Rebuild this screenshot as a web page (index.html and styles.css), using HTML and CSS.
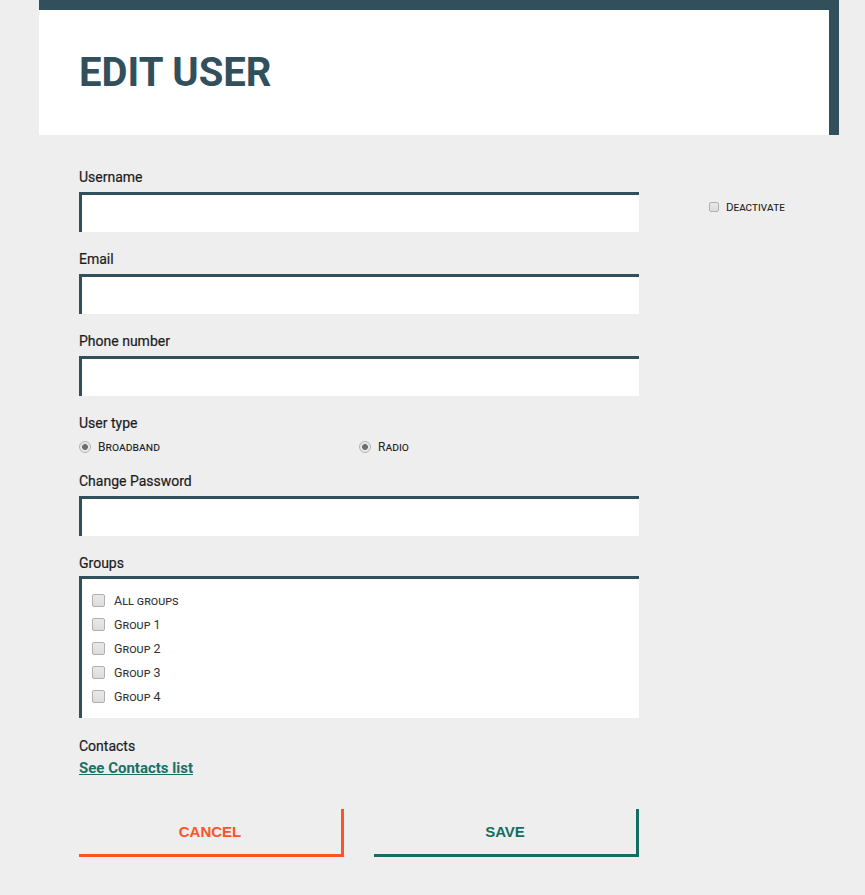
FILE: index.html
```html
<!DOCTYPE html>
<html lang="en">
<head>
<meta charset="utf-8">
<title>Edit user</title>
<link rel="stylesheet" href="styles.css">
</head>
<body>
<div class="page">
  <header class="header">
    <h1 class="title">EDIT USER</h1>
  </header>
  <form class="form">
    <div class="main">
      <div class="field">
        <label class="label">Username</label>
        <input class="input" type="text">
      </div>
      <div class="field">
        <label class="label">Email</label>
        <input class="input" type="text">
      </div>
      <div class="field">
        <label class="label">Phone number</label>
        <input class="input" type="text">
      </div>
      <div class="field field-radio">
        <label class="label">User type</label>
        <div class="radios">
          <label class="option"><input class="radio" type="radio" name="type" checked disabled><span>Broadband</span></label>
          <label class="option"><input class="radio" type="radio" name="type2" checked disabled><span>Radio</span></label>
        </div>
      </div>
      <div class="field">
        <label class="label">Change Password</label>
        <input class="input" type="password">
      </div>
      <div class="field field-groups">
        <label class="label">Groups</label>
        <div class="groups">
          <label class="group"><input class="check" type="checkbox" disabled><span>All groups</span></label>
          <label class="group"><input class="check" type="checkbox" disabled><span>Group 1</span></label>
          <label class="group"><input class="check" type="checkbox" disabled><span>Group 2</span></label>
          <label class="group"><input class="check" type="checkbox" disabled><span>Group 3</span></label>
          <label class="group"><input class="check" type="checkbox" disabled><span>Group 4</span></label>
        </div>
      </div>
      <div class="contacts">
        <div class="label">Contacts</div>
        <a class="link" href="#">See Contacts list</a>
      </div>
      <div class="buttons">
        <button type="button" class="btn btn-cancel">CANCEL</button>
        <button type="button" class="btn btn-save">SAVE</button>
      </div>
    </div>
    <div class="side">
      <label class="deactivate"><input class="check check-small" type="checkbox" disabled><span>Deactivate</span></label>
    </div>
  </form>
</div>
</body>
</html>
```
FILE: styles.css
```css
html, body {
  margin: 0;
  padding: 0;
  background: #eeeeee;
  font-family: Roboto, "Liberation Sans", Arial, sans-serif;
}

.page {
  margin-left: 39px;
  width: 800px;
}

.header {
  background: #ffffff;
  border-top: 10px solid #324f5c;
  border-right: 10px solid #324f5c;
  height: 125px;
  box-sizing: content-box;
  padding: 0 0 0 40px;
}

.title {
  margin: 0;
  padding-top: 39px;
  font-size: 40px;
  line-height: 48px;
  font-weight: 700;
  color: #324f5c;
}

.form {
  display: flex;
  padding: 33px 0 0 40px;
  margin: 0;
}

.main {
  width: 560px;
  display: flex;
  flex-direction: column;
}

.field {
  display: flex;
  flex-direction: column;
  margin-bottom: 18px;
}

.label {
  font-size: 14px;
  line-height: 18px;
  font-weight: 400;
  color: #1c1c1c;
  -webkit-text-stroke: 0.2px #1c1c1c;
}

.input {
  margin: 6px 0 0;
  height: 40px;
  box-sizing: border-box;
  border: none;
  border-top: 3px solid #324f5c;
  border-left: 3px solid #324f5c;
  background: #ffffff;
  outline: none;
  padding: 0 10px;
  font-family: inherit;
  font-size: 14px;
}

.field-radio {
  margin-bottom: 16px;
}

.radios {
  display: grid;
  grid-template-columns: 280px 280px;
  margin-top: 6px;
}

.option {
  display: flex;
  align-items: center;
  height: 18px;
  font-size: 12px;
  font-variant: small-caps;
  color: #222222;
}

.radio {
  appearance: none;
  -webkit-appearance: none;
  width: 12px;
  height: 12px;
  margin: 0 7px 0 0;
  border: 1px solid #b4b4b4;
  border-radius: 50%;
  box-sizing: border-box;
  background: radial-gradient(circle, #6e6e6e 0, #6e6e6e 2.6px, #e4e4e4 3.2px, #f2f2f2 100%);
}

.field-groups {
  margin-bottom: 19px;
}

.groups {
  margin-top: 4px;
  height: 142px;
  box-sizing: border-box;
  background: #ffffff;
  border-top: 3px solid #324f5c;
  border-left: 3px solid #324f5c;
  padding: 9px 0 0 10px;
  display: flex;
  flex-direction: column;
}

.group {
  display: flex;
  align-items: center;
  height: 24px;
  font-size: 12.5px;
  font-variant: small-caps;
  color: #333333;
}

.check {
  appearance: none;
  -webkit-appearance: none;
  width: 13px;
  height: 13px;
  margin: 0 9px 0 0;
  box-sizing: border-box;
  border: 1px solid #b0b0b0;
  border-radius: 2px;
  background: linear-gradient(#e9e9e9, #dcdcdc);
}

.contacts {
  display: flex;
  flex-direction: column;
}

.link {
  margin-top: 4px;
  font-size: 15px;
  line-height: 18px;
  font-weight: 700;
  color: #1b6f69;
  text-decoration: underline;
  align-self: flex-start;
}

.buttons {
  display: flex;
  justify-content: space-between;
  margin-top: 32px;
}

.btn {
  width: 265px;
  height: 48px;
  box-sizing: border-box;
  background: transparent;
  border: none;
  border-right: 3px solid;
  border-bottom: 3px solid;
  font-family: "Liberation Sans", Arial, sans-serif;
  font-weight: 700;
  font-size: 15px;
  padding: 0;
  cursor: pointer;
}

.btn-cancel {
  color: #ff5326;
  border-color: #ff5326;
}

.btn-save {
  color: #146d60;
  border-color: #146d60;
}

.side {
  margin-left: 70px;
  padding-top: 31px;
}

.deactivate {
  display: flex;
  align-items: center;
  height: 16px;
  font-size: 11.5px;
  font-variant: small-caps;
  color: #222222;
}

.check-small {
  width: 10px;
  height: 10px;
  margin: 0 7px 0 0;
  border-radius: 2px;
}
```
